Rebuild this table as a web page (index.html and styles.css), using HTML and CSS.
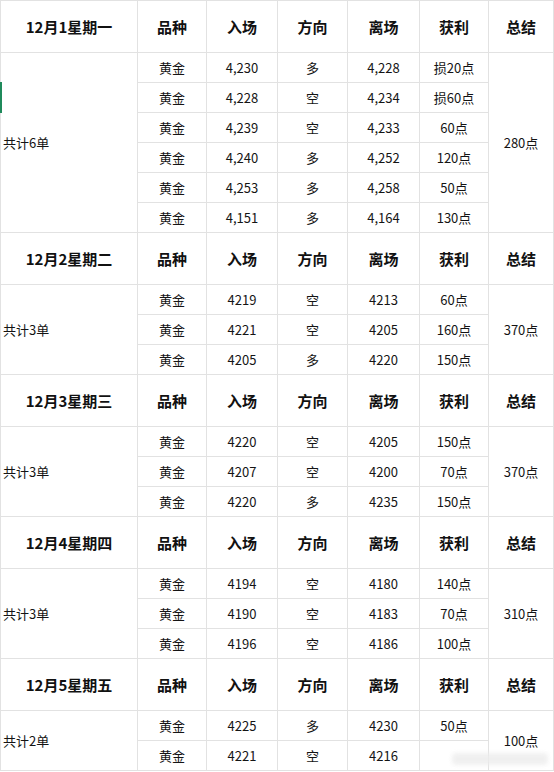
FILE: index.html
```html
<!DOCTYPE html>
<html lang="zh">
<head>
<meta charset="utf-8">
<title>交易记录</title>
<link rel="stylesheet" href="styles.css">
</head>
<body>
<div class="sheet">
  <div class="block rows6">
    <div class="cell head date">12月1星期一</div>
    <div class="cell head">品种</div>
    <div class="cell head">入场</div>
    <div class="cell head">方向</div>
    <div class="cell head">离场</div>
    <div class="cell head">获利</div>
    <div class="cell head">总结</div>
    <div class="cell count">共计6单</div>
    <div class="cell">黄金</div><div class="cell">4,230</div><div class="cell">多</div><div class="cell">4,228</div><div class="cell">损20点</div>
    <div class="cell total">280点</div>
    <div class="cell">黄金</div><div class="cell">4,228</div><div class="cell">空</div><div class="cell">4,234</div><div class="cell">损60点</div>
    <div class="cell">黄金</div><div class="cell">4,239</div><div class="cell">空</div><div class="cell">4,233</div><div class="cell">60点</div>
    <div class="cell">黄金</div><div class="cell">4,240</div><div class="cell">多</div><div class="cell">4,252</div><div class="cell">120点</div>
    <div class="cell">黄金</div><div class="cell">4,253</div><div class="cell">多</div><div class="cell">4,258</div><div class="cell">50点</div>
    <div class="cell">黄金</div><div class="cell">4,151</div><div class="cell">多</div><div class="cell">4,164</div><div class="cell">130点</div>
  </div>
  <div class="block rows3">
    <div class="cell head date">12月2星期二</div>
    <div class="cell head">品种</div>
    <div class="cell head">入场</div>
    <div class="cell head">方向</div>
    <div class="cell head">离场</div>
    <div class="cell head">获利</div>
    <div class="cell head">总结</div>
    <div class="cell count">共计3单</div>
    <div class="cell">黄金</div><div class="cell">4219</div><div class="cell">空</div><div class="cell">4213</div><div class="cell">60点</div>
    <div class="cell total">370点</div>
    <div class="cell">黄金</div><div class="cell">4221</div><div class="cell">空</div><div class="cell">4205</div><div class="cell">160点</div>
    <div class="cell">黄金</div><div class="cell">4205</div><div class="cell">多</div><div class="cell">4220</div><div class="cell">150点</div>
  </div>
  <div class="block rows3">
    <div class="cell head date">12月3星期三</div>
    <div class="cell head">品种</div>
    <div class="cell head">入场</div>
    <div class="cell head">方向</div>
    <div class="cell head">离场</div>
    <div class="cell head">获利</div>
    <div class="cell head">总结</div>
    <div class="cell count">共计3单</div>
    <div class="cell">黄金</div><div class="cell">4220</div><div class="cell">空</div><div class="cell">4205</div><div class="cell">150点</div>
    <div class="cell total">370点</div>
    <div class="cell">黄金</div><div class="cell">4207</div><div class="cell">空</div><div class="cell">4200</div><div class="cell">70点</div>
    <div class="cell">黄金</div><div class="cell">4220</div><div class="cell">多</div><div class="cell">4235</div><div class="cell">150点</div>
  </div>
  <div class="block rows3">
    <div class="cell head date">12月4星期四</div>
    <div class="cell head">品种</div>
    <div class="cell head">入场</div>
    <div class="cell head">方向</div>
    <div class="cell head">离场</div>
    <div class="cell head">获利</div>
    <div class="cell head">总结</div>
    <div class="cell count">共计3单</div>
    <div class="cell">黄金</div><div class="cell">4194</div><div class="cell">空</div><div class="cell">4180</div><div class="cell">140点</div>
    <div class="cell total">310点</div>
    <div class="cell">黄金</div><div class="cell">4190</div><div class="cell">空</div><div class="cell">4183</div><div class="cell">70点</div>
    <div class="cell">黄金</div><div class="cell">4196</div><div class="cell">空</div><div class="cell">4186</div><div class="cell">100点</div>
  </div>
  <div class="block rows2">
    <div class="cell head date">12月5星期五</div>
    <div class="cell head">品种</div>
    <div class="cell head">入场</div>
    <div class="cell head">方向</div>
    <div class="cell head">离场</div>
    <div class="cell head">获利</div>
    <div class="cell head">总结</div>
    <div class="cell count">共计2单</div>
    <div class="cell">黄金</div><div class="cell">4225</div><div class="cell">多</div><div class="cell">4230</div><div class="cell">50点</div>
    <div class="cell total">100点</div>
    <div class="cell">黄金</div><div class="cell">4221</div><div class="cell">空</div><div class="cell">4216</div><div class="cell"></div>
  </div>
  <div class="marker"></div>
  <div class="watermark"></div>
</div>
</body>
</html>
```

FILE: styles.css
```css
html, body {
  margin: 0;
  padding: 0;
  background: #ffffff;
}
body {
  font-family: "Noto Sans CJK SC", "Noto Sans", sans-serif;
  color: #141414;
}
.sheet {
  position: relative;
  width: 554px;
  display: flex;
  flex-direction: column;
  gap: 1px;
  padding: 1px 0;
  background: #e2e2e2;
  box-sizing: border-box;
}
.block {
  display: grid;
  grid-template-columns: 136px 68px 70px 69px 71px 68px 64px;
  gap: 1px;
  padding: 0 1px;
  background: #e2e2e2;
}
.rows6 { grid-template-rows: 51px repeat(6, 29px); }
.rows3 { grid-template-rows: 51px repeat(3, 29px); }
.rows2 { grid-template-rows: 51px repeat(2, 29px); }
.cell {
  background: #ffffff;
  display: flex;
  align-items: center;
  justify-content: center;
  font-size: 13px;
  line-height: 1;
  white-space: nowrap;
}
.head {
  font-size: 15px;
  font-weight: 700;
  color: #111111;
}
.count {
  grid-column: 1;
  grid-row: 2 / -1;
  justify-content: flex-start;
  padding-left: 2px;
}
.total {
  grid-column: 7;
  grid-row: 2 / -1;
}
.rows6 .count, .rows6 .total { grid-row: 2 / 8; }
.rows3 .count, .rows3 .total { grid-row: 2 / 5; }
.rows2 .count, .rows2 .total { grid-row: 2 / 4; }
.marker {
  position: absolute;
  left: 0;
  top: 82px;
  width: 2px;
  height: 31px;
  background: #1f8a5b;
}
.watermark {
  position: absolute;
  left: 452px;
  top: 753px;
  width: 96px;
  height: 12px;
  background: #ececec;
  border-radius: 4px;
  filter: blur(2px);
  opacity: 0.8;
}
```
